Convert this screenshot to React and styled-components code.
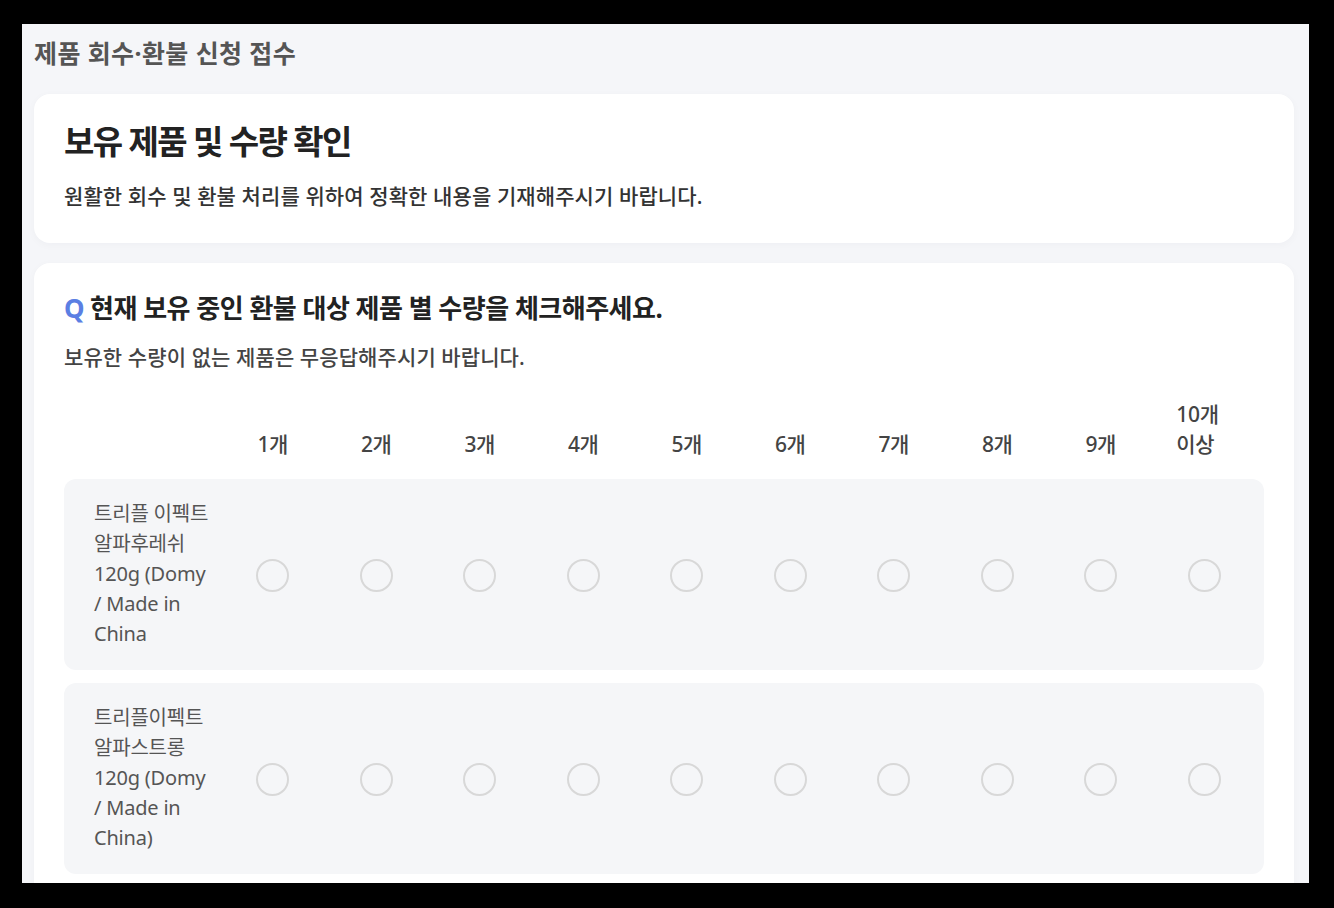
import React from 'react'
import styled, { createGlobalStyle } from 'styled-components'

const GlobalStyle = createGlobalStyle`
  html, body {
    margin: 0;
    padding: 0;
    background: #000;
  }
  body {
    font-family: "Noto Sans", "Noto Sans CJK KR", sans-serif;
  }
`

const Frame = styled.div`
  margin: 24px 25px 0 22px;
  height: 859px;
  background: #f5f6f9;
  overflow: hidden;
  padding: 0 15px 0 12px;
  box-sizing: border-box;
`

const PageTitle = styled.h1`
  margin: 0;
  padding-top: 12px;
  font-size: 25px;
  line-height: 34px;
  font-weight: 700;
  color: #555;
  letter-spacing: 0.4px;
`

const Card = styled.section`
  background: #fff;
  border-radius: 16px;
  box-shadow: 0 2px 8px rgba(20, 30, 60, 0.03);
  padding: ${p => p.$pad || '26px 30px 32px'};
  margin-top: ${p => p.$top || '20px'};
`

const CardTitle = styled.h2`
  margin: 0;
  font-size: 33px;
  line-height: 44px;
  font-weight: 700;
  color: #222;
  letter-spacing: -1.6px;
`

const Desc = styled.p`
  margin: ${p => p.$mt || '17px'} 0 0;
  font-size: 21px;
  line-height: 30px;
  font-weight: 500;
  color: ${p => p.$color || '#333'};
  letter-spacing: 0.1px;
`

const Question = styled.h3`
  margin: 0;
  font-size: 26px;
  line-height: 36px;
  font-weight: 700;
  color: #222;
  letter-spacing: -0.5px;
`

const Q = styled.span`
  color: #5b7fe3;
  margin-right: 6px;
`

const Grid = styled.div`
  display: grid;
  grid-template-columns: 157px repeat(10, 1fr);
  padding-right: 8px;
`

const HeaderRow = styled(Grid)`
  margin-top: 27px;
  align-items: end;
`

const HeadCell = styled.div`
  display: flex;
  justify-content: center;
  font-size: 21px;
  line-height: 30px;
  font-weight: 500;
  color: #444;
  letter-spacing: -0.3px;
`

const HeadText = styled.span`
  display: inline-block;
  max-width: 56px;
  text-align: left;
  word-break: keep-all;
`

const Rows = styled.div`
  margin-top: 20px;
  display: flex;
  flex-direction: column;
  gap: 13px;
`

const Row = styled(Grid)`
  background: #f5f6f8;
  border-radius: 12px;
  align-items: center;
  padding-top: 20px;
  padding-bottom: 21px;
`

const Label = styled.div`
  padding: 0 5px 0 30px;
  font-size: 20px;
  line-height: 30px;
  font-weight: 400;
  color: #555;
  letter-spacing: -0.2px;
  word-break: keep-all;
`

const Cell = styled.div`
  display: flex;
  justify-content: center;
  padding-top: 2px;
`

const Radio = styled.span`
  width: 33px;
  height: 33px;
  border-radius: 50%;
  border: 2.5px solid #d8d8d8;
  box-sizing: border-box;
  cursor: pointer;
`

const counts = ['1개', '2개', '3개', '4개', '5개', '6개', '7개', '8개', '9개', '10개 이상']

const products = [
  '트리플 이펙트 알파후레쉬 120g (Domy / Made in China',
  '트리플이펙트 알파스트롱 120g (Domy / Made in China)',
]

export default function App() {
  return (
    <>
      <GlobalStyle />
      <Frame>
        <PageTitle>제품 회수·환불 신청 접수</PageTitle>
        <Card $top="24px">
          <CardTitle>보유 제품 및 수량 확인</CardTitle>
          <Desc>원활한 회수 및 환불 처리를 위하여 정확한 내용을 기재해주시기 바랍니다.</Desc>
        </Card>
        <Card $pad="27px 30px 30px">
          <Question><Q>Q</Q>현재 보유 중인 환불 대상 제품 별 수량을 체크해주세요.</Question>
          <Desc $mt="16px" $color="#444">보유한 수량이 없는 제품은 무응답해주시기 바랍니다.</Desc>
          <HeaderRow>
            <div />
            {counts.map(c => (
              <HeadCell key={c}><HeadText>{c}</HeadText></HeadCell>
            ))}
          </HeaderRow>
          <Rows>
            {products.map(p => (
              <Row key={p}>
                <Label>{p}</Label>
                {Array.from({ length: 10 }).map((_, i) => (
                  <Cell key={i}><Radio /></Cell>
                ))}
              </Row>
            ))}
          </Rows>
        </Card>
      </Frame>
    </>
  )
}
